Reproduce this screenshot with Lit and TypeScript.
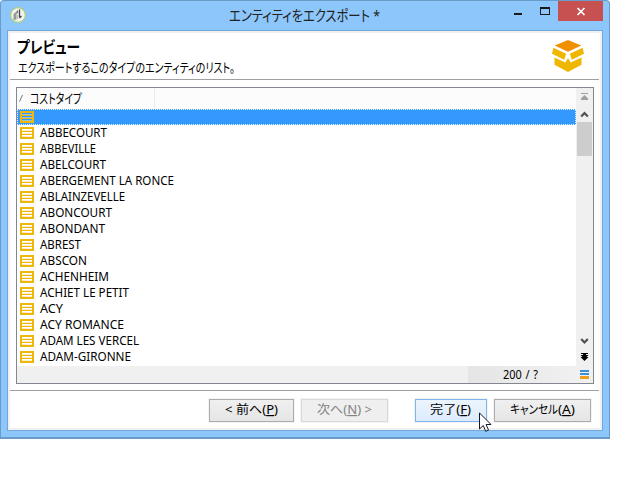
import { LitElement, html, css, svg } from "lit";
import { customElement, property } from "lit/decorators.js";

/* A single line of text, set to an exact advance width. */
@customElement("fit-text")
class FitText extends LitElement {
  @property() text = "";
  @property() key = "";
  @property() tail = "";
  @property({ type: Number }) width = 100;
  static styles = css`
    :host { display: block; height: 16px; flex: none; font-feature-settings: "palt"; }
    svg { display: block; overflow: visible; }
    text { fill: currentColor; white-space: pre; }
    .key { text-decoration: underline; text-decoration-thickness: 1px; text-underline-offset: 1px; }
  `;
  render() {
    return html`<svg width=${this.width} height="16">
      ${svg`<text x="0" y="12" textLength=${this.width} lengthAdjust="spacingAndGlyphs">${this.text}${this.key ? svg`<tspan class="key">${this.key}</tspan>` : ""}${this.tail}</text>`}
    </svg>`;
  }
}

const rows: [string, number][] = [
  ["", 0],
  ["ABBECOURT", 67],
  ["ABBEVILLE", 56],
  ["ABELCOURT", 66],
  ["ABERGEMENT LA RONCE", 134],
  ["ABLAINZEVELLE", 85],
  ["ABONCOURT", 72],
  ["ABONDANT", 65],
  ["ABREST", 41],
  ["ABSCON", 47],
  ["ACHENHEIM", 69],
  ["ACHIET LE PETIT", 89],
  ["ACY", 23],
  ["ACY ROMANCE", 84],
  ["ADAM LES VERCEL", 99],
  ["ADAM-GIRONNE", 91],
];

@customElement("app-root")
class AppRoot extends LitElement {
  static styles = css`
    :host {
      display: block; position: relative; width: 639px; height: 478px; overflow: hidden; background: #fff;
      font: 12px "Noto Sans", "Noto Sans CJK JP", sans-serif; color: #000;
    }
    * { box-sizing: border-box; }
    svg { display: block; flex: none; }
    .window {
      width: 610px; height: 439px; background: #8cc6fa; display: flex; flex-direction: column;
      border: 1px solid #6a9cc9; border-bottom-width: 2px; border-radius: 4px 4px 0 0;
    }
    .titlebar { height: 29px; display: flex; flex: none; padding-left: 8px; }
    .logo { margin-top: 5px; }
    .caption { margin: 8px 0 0 202px; font-size: 15px; color: #222; }
    .controls { display: flex; margin-left: auto; margin-right: 6px; }
    .close { width: 45px; height: 20px; background: #c75050; }
    .body {
      margin: 0 6px 6px; flex: 1; border: 1px solid #6fa8dc; background: #fff;
      box-shadow: inset 0 0 0 2px #f0f0f0; padding: 2px; display: flex; flex-direction: column;
    }
    .head { height: 47px; border-bottom: 1px solid #a0a0a0; display: flex; justify-content: space-between; padding: 0 15px 0 7px; margin-right: 1px; flex: none; }
    .title { font-size: 16px; font-weight: 700; margin-top: 8px; }
    .sub { margin-top: 3px; margin-left: 1px; font-size: 13px; }
    .emblem { margin-top: 7px; }
    .table { margin: 7px 6px 0; height: 297px; width: 578px; border: 1px solid #828790; display: flex; flex-direction: column; flex: none; }
    .main { display: flex; height: 278px; }
    .list { flex: 1; }
    .cols { height: 21px; background: #fcfcfc; display: flex; }
    .col { width: 138px; border-right: 1px solid #e3eefa; display: flex; padding: 3px 0 0 2px; }
    .colname { margin-left: 6px; font-size: 13px; }
    .row { height: 16px; display: flex; padding-left: 3px; align-items: center; }
    .row fit-text { margin-left: 6px; }
    .row.sel { background: #3399ff; outline: 1px dotted #e8f4ff; outline-offset: -1px; }
    .scroll { width: 17px; background: #f0f0f0; display: flex; flex-direction: column; }
    .thumb { height: 34px; width: 15px; margin-left: 1px; background: #cdcdcd; }
    .grow { flex: 1; }
    .status { height: 17px; background: #f0f0f0; display: flex; }
    .count { margin-left: 451px; width: 108px; background: linear-gradient(90deg, #e5e5e5, #f0f0f0); padding: 1px 0 0 35px; }
    .count fit-text { word-spacing: 1px; }
    .foot { margin: 6px 1px 0 0; border-top: 1px solid #a0a0a0; padding: 8px 8px 0 199px; display: flex; }
    .btn { height: 23px; border: 1px solid #acacac; background: linear-gradient(#f0f0f0, #e5e5e5); display: flex; justify-content: center; padding-top: 2px; outline: 1px solid #f4f4f4; }
    .b1 { width: 85px; }
    .b2 { width: 87px; margin-left: 7px; background: #efefef; border-color: #d9d9d9; color: #838383; }
    .b3 { width: 73px; margin-left: 27px; background: linear-gradient(#ecf4fc, #dcecfc); border-color: #7eb4ea; }
    .b4 { width: 97px; margin-left: 7px; }
    .cursor { position: absolute; left: 479px; top: 412px; }
  `;

  rowIcon() {
    return html`<svg width="14" height="12" shape-rendering="crispEdges">
      <path fill="#efb70c" d="M0 0h14v12H0zM2 2v2h10V2zM2 5v2h10V5zM2 8v2h10V8z" fill-rule="evenodd" />
      <path fill="#f8e6a4" d="M2 3h10v1H2zM2 6h10v1H2zM2 9h10v1H2z" opacity=".55" />
    </svg>`;
  }

  render() {
    return html`
      <div class="window">
        <div class="titlebar">
          <svg class="logo" width="18" height="18">
            <circle cx="9" cy="9" r="7.4" fill="#f3f4ee" stroke="#a9cf84" stroke-width="1.2" />
            <path d="M4.500 8l3-2.500v8l-3 .500z" fill="#999" />
            <path d="M7.500 5.500l1.500-1.500v3l-1.500 1z" fill="#777" />
            <path d="M10.500 3.500v8M10.500 12l2-2" stroke="#444" stroke-width="1.300" fill="none" />
            <path d="M8.500 9v4" stroke="#bbb" />
          </svg>
          <fit-text class="caption" text="エンティティをエクスポート *" width="151"></fit-text>
          <div class="controls">
            <svg width="54" height="22" shape-rendering="crispEdges">
              <path d="M10 12h8v2h-8z" fill="#1a1a1a" />
              <path d="M36 6h10v8H36zM37 8v5h8V8z" fill="#1a1a1a" fill-rule="evenodd" />
            </svg>
            <div class="close">
              <svg width="45" height="20"><path d="M19.500 7l7 7M26.500 7l-7 7" stroke="#fff" stroke-width="1.700" /></svg>
            </div>
          </div>
        </div>
        <div class="body">
          <div class="head">
            <div>
              <fit-text class="title" text="プレビュー" width="63"></fit-text>
              <fit-text class="sub" text="エクスポートするこのタイプのエンティティのリスト。" width="217"></fit-text>
            </div>
            <svg class="emblem" width="32" height="32">
              <path fill="#f09000" d="M16 0l13.300 5.600L16 11.800 2.700 5.600z" />
              <path fill="#efb700" d="M1.400 7.700l12.800 6.100-2 5.900L0 13.700zM30.600 7.700l-12.800 6.100 2 5.900 12.200-6z" />
              <path fill="#efb700" d="M2.500 17.500l10.800 5L16 18l2.700 4.500 10.800-5v7.200L16 32 2.500 24.700z" />
            </svg>
          </div>
          <div class="table">
            <div class="main">
              <div class="list">
                <div class="cols">
                  <div class="col">
                    <svg width="5" height="16"><path d="M.5 10.500L3.500 4" stroke="#777" /></svg>
                    <fit-text class="colname" text="コストタイプ" width="52"></fit-text>
                  </div>
                </div>
                ${rows.map(([name, w], i) => html`<div class="row ${i === 0 ? "sel" : ""}">
                  ${this.rowIcon()}${name ? html`<fit-text text=${name} width=${w}></fit-text>` : ""}
                </div>`)}
              </div>
              <div class="scroll">
                <svg width="17" height="34">
                  <path d="M5 5.500h7M5 11.500h7" stroke="#a0a0a0" />
                  <path d="M8.500 7l4 4h-8z" fill="#a0a0a0" />
                  <path d="M5.200 28.500l3.300-3.500 3.300 3.500" stroke="#505050" stroke-width="2.200" fill="none" />
                </svg>
                <div class="thumb"></div>
                <div class="grow"></div>
                <svg width="17" height="29">
                  <path d="M5.200 2l3.300 3.500L11.800 2" stroke="#505050" stroke-width="2.200" fill="none" />
                  <path d="M5 16h7v1h-2v1h2.500L8.500 22l-4-4H7v-1H5zM4.500 20h8l-4 4z" fill="#000" />
                </svg>
              </div>
            </div>
            <div class="status">
              <div class="count"><fit-text text="200 / ?" width="35"></fit-text></div>
              <svg width="14" height="17" shape-rendering="crispEdges">
                <path d="M4 4h9v2H4zM4 7h9v2H4z" fill="#3d8fd8" />
                <path d="M4 10h9v3H4z" fill="#f09c20" />
              </svg>
            </div>
          </div>
          <div class="foot">
            <div class="btn b1"><fit-text text="< 前へ(" key="P" tail=")" width="53"></fit-text></div>
            <div class="btn b2"><fit-text text="次へ(" key="N" tail=") >" width="55"></fit-text></div>
            <div class="btn b3"><fit-text text="完了(" key="F" tail=")" width="41"></fit-text></div>
            <div class="btn b4"><fit-text text="キャンセル" width="48"></fit-text><fit-text text="(" key="A" tail=")" width="17"></fit-text></div>
          </div>
        </div>
      </div>
      <svg class="cursor" width="14" height="21">
        <path d="M.5 1v16l3.800-3.500 2.400 5.800 2.800-1.200-2.400-5.600h5z" fill="#fff" stroke="#111827" />
      </svg>
    `;
  }
}
